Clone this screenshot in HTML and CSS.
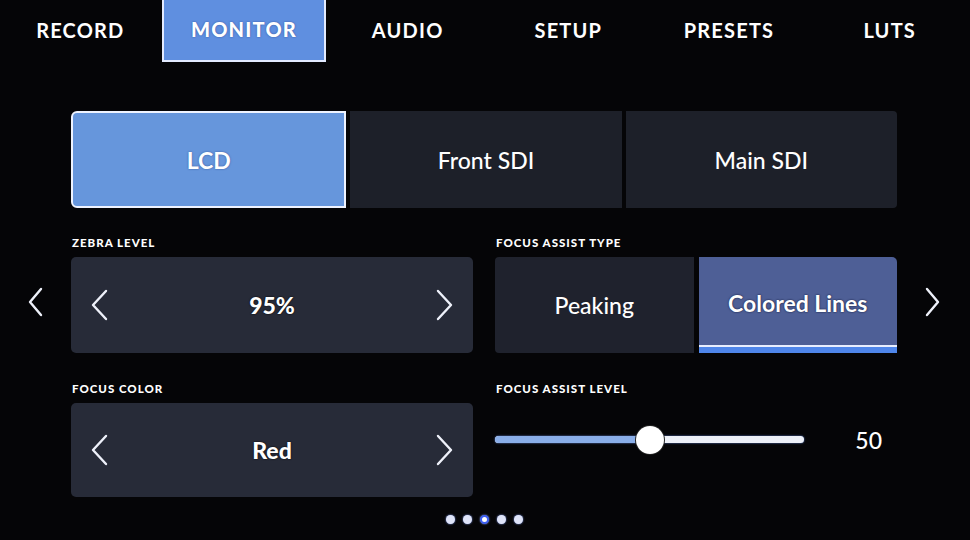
FILE: index.html
```html
<!DOCTYPE html>
<html lang="en">
<head>
    <meta charset="UTF-8">
    <title>Monitor</title>
    <link rel="stylesheet" href="styles.css">
</head>
<body>
    <div class="tabs">
        <div class="tab">RECORD</div>
        <div class="tab active">MONITOR</div>
        <div class="tab">AUDIO</div>
        <div class="tab">SETUP</div>
        <div class="tab">PRESETS</div>
        <div class="tab">LUTS</div>
    </div>

    <div class="main">
        <div class="gutter left">
            <svg width="16" height="30" viewBox="0 0 16 30"><polyline points="14,2 3,15 14,28" /></svg>
        </div>

        <div class="content">
            <div class="outputs">
                <div class="out active">LCD</div>
                <div class="out">Front SDI</div>
                <div class="out">Main SDI</div>
            </div>

            <div class="grid">
                <div class="cell">
                    <div class="label">ZEBRA LEVEL</div>
                    <div class="stepper">
                        <svg width="18" height="32" viewBox="0 0 18 32"><polyline points="16,2 3,16 16,30" /></svg>
                        <span>95%</span>
                        <svg width="18" height="32" viewBox="0 0 18 32"><polyline points="2,2 15,16 2,30" /></svg>
                    </div>
                </div>
                <div class="cell">
                    <div class="label">FOCUS ASSIST TYPE</div>
                    <div class="toggle">
                        <div class="opt">Peaking</div>
                        <div class="opt active">Colored Lines</div>
                    </div>
                </div>
                <div class="cell">
                    <div class="label">FOCUS COLOR</div>
                    <div class="stepper short">
                        <svg width="18" height="32" viewBox="0 0 18 32"><polyline points="16,2 3,16 16,30" /></svg>
                        <span>Red</span>
                        <svg width="18" height="32" viewBox="0 0 18 32"><polyline points="2,2 15,16 2,30" /></svg>
                    </div>
                </div>
                <div class="cell">
                    <div class="label">FOCUS ASSIST LEVEL</div>
                    <div class="level">
                        <div class="track">
                            <div class="fill" style="width: 50%"></div>
                            <div class="thumb" style="left: 50%"></div>
                        </div>
                        <div class="value">50</div>
                    </div>
                </div>
            </div>
        </div>

        <div class="gutter right">
            <svg width="16" height="30" viewBox="0 0 16 30"><polyline points="2,2 13,15 2,28" /></svg>
        </div>
    </div>

    <div class="dots">
        <span></span><span></span><span class="on"></span><span></span><span></span>
    </div>
</body>
</html>
```

FILE: styles.css
```css
body {
    margin: 0;
    width: 970px;
    height: 540px;
    overflow: hidden;
    background-color: #050507;
    font-family: Lato, "Open Sans", sans-serif;
    color: #fff;
}
svg polyline {
    fill: none;
    stroke: #eef1fa;
    stroke-width: 2.4;
    stroke-linecap: round;
    stroke-linejoin: round;
}

/* top menu */
.tabs {
    display: flex;
    height: 62px;
}
.tab {
    flex: 1;
    display: flex;
    align-items: center;
    justify-content: center;
    font-size: 20px;
    font-weight: bold;
    letter-spacing: 1.2px;
    padding-bottom: 2px;
}
.tab.active {
    background-color: #5f8fe0;
    border: 2px solid #e3ebff;
    border-top: none;
    margin: 0 1px;
    font-weight: 900;
    text-shadow: 0 0 2px rgba(20,40,110,0.6);
}

/* middle area */
.main {
    display: flex;
    align-items: center;
    margin-top: 49px;
}
.gutter {
    display: flex;
    align-items: center;
    justify-content: center;
}
.gutter.left {
    width: 71px;
    padding-bottom: 4px;
}
.gutter.left svg { margin-right: 1px; }
.gutter.right {
    width: 73px;
    padding-bottom: 4px;
}
.gutter.right svg { margin-right: 2px; }
.content {
    flex: 1;
}

.outputs {
    display: flex;
    gap: 4px;
    height: 97px;
}
.out {
    flex: 1;
    display: flex;
    align-items: center;
    justify-content: center;
    background-color: #1d2029;
    font-size: 23px;
    font-weight: 500;
    border-radius: 0 4px 4px 0;
}
.out:first-child { border-radius: 5px 0 0 5px; }
.out:nth-child(2) { border-radius: 0; }
.out.active {
    background-color: #6696dc;
    border: 2px solid #eef3ff;
    border-radius: 6px 0 0 6px;
    font-weight: bold;
    text-shadow: 0 0 2px rgba(20,40,110,0.6);
}

.grid {
    display: grid;
    grid-template-columns: 1fr 1fr;
    column-gap: 22px;
    row-gap: 29px;
    margin-top: 28px;
}
.label {
    font-size: 11.5px;
    font-weight: 900;
    letter-spacing: 1px;
    height: 21px;
    line-height: 14px;
    padding-left: 1px;
}

.stepper {
    height: 96px;
    background-color: #272b38;
    border-radius: 5px;
    display: flex;
    align-items: center;
    justify-content: space-between;
    padding: 0 19px 0 19px;
    font-size: 23px;
    font-weight: 900;
    text-shadow: 0 0 2px #000;
}
.stepper.short { height: 94px; }

.toggle {
    height: 96px;
    display: flex;
    gap: 5px;
}
.opt {
    flex: 1;
    display: flex;
    align-items: center;
    justify-content: center;
    background-color: #1f222d;
    border-radius: 4px 0 0 4px;
    font-size: 23px;
    font-weight: 500;
}
.opt.active {
    background-color: #4e5f96;
    border-radius: 0 5px 0 0;
    border-bottom: 6px solid #4f86ea;
    box-shadow: inset 0 -2px 0 #e8eeff;
    font-weight: bold;
    text-shadow: 0 0 2px #0a1030;
    padding-top: 2px;
}

.level {
    display: flex;
    align-items: center;
    height: 73px;
}
.track {
    position: relative;
    width: 309px;
    height: 7px;
    background-color: #eef1f8;
    border-radius: 4px;
    box-shadow: 0 0 2px #6a8fe0;
}
.fill {
    height: 100%;
    background-color: #8aaee8;
    border-radius: 4px 0 0 4px;
}
.thumb {
    position: absolute;
    top: 50%;
    width: 28px;
    height: 28px;
    margin: -14px 0 0 -14px;
    border-radius: 50%;
    background-color: #fff;
    box-shadow: 0 0 0 1px #222;
}
.value {
    flex: 1;
    text-align: right;
    padding-right: 15px;
    font-size: 23px;
    font-weight: 500;
}

.dots {
    display: flex;
    justify-content: center;
    gap: 8px;
    margin-top: 18px;
    padding-right: 2px;
}
.dots span {
    width: 9px;
    height: 9px;
    border-radius: 50%;
    background-color: #dfe4f8;
    box-shadow: 0 0 2px #8ea8ff;
}
.dots span.on {
    box-sizing: border-box;
    background-color: #fff;
    border: 2px solid #3d5ff0;
}
```
